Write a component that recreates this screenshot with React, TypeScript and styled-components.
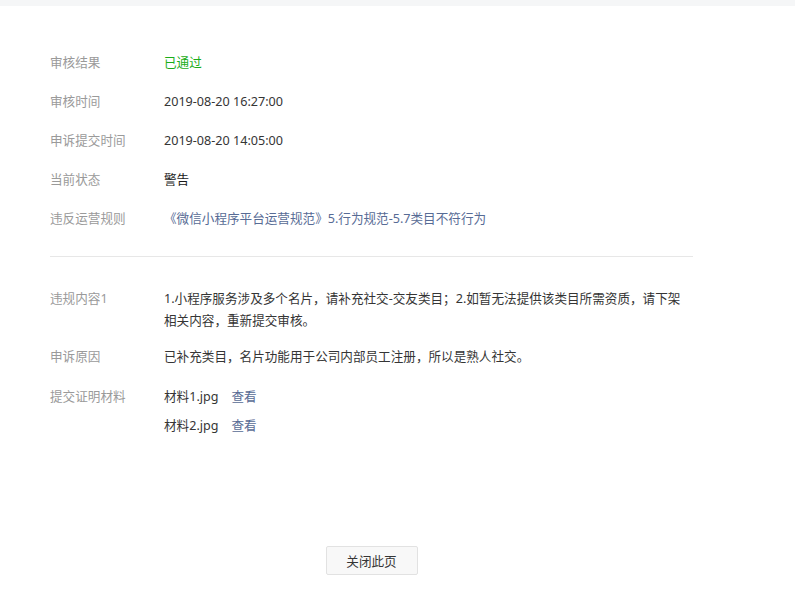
import styled, { createGlobalStyle } from "styled-components";

const GlobalStyle = createGlobalStyle`
	html, body {
		margin: 0;
		padding: 0;
		background: #ffffff;
		font-family: "Noto Sans", "Noto Sans CJK SC", sans-serif;
		font-size: 12.6px;
		color: #353535;
	}
`;

type InfoRow = { label: string; value: string; tone?: "green" | "link" | "dark" };

const summary: InfoRow[] = [
	{ label: "审核结果", value: "已通过", tone: "green" },
	{ label: "审核时间", value: "2019-08-20 16:27:00" },
	{ label: "申诉提交时间", value: "2019-08-20 14:05:00" },
	{ label: "当前状态", value: "警告", tone: "dark" },
	{ label: "违反运营规则", value: "《微信小程序平台运营规范》5.行为规范-5.7类目不符行为", tone: "link" },
];

const files = ["材料1.jpg", "材料2.jpg"];

function App() {
	return (
		<>
			<GlobalStyle />
			<TopBar />
			<Page>
				<Section>
					{summary.map((row) => (
						<Row key={row.label} $space={17}>
							<Label>{row.label}</Label>
							<Value $tone={row.tone}>{row.value}</Value>
						</Row>
					))}
				</Section>
				<Divider />
				<Section>
					<Row $space={14}>
						<Label>违规内容1</Label>
						<Value>
							1.小程序服务涉及多个名片，请补充社交-交友类目；2.如暂无法提供该类目所需资质，请下架相关内容，重新提交审核。
						</Value>
					</Row>
					<Row $space={18}>
						<Label>申诉原因</Label>
						<Value>已补充类目，名片功能用于公司内部员工注册，所以是熟人社交。</Value>
					</Row>
					<Row $space={0}>
						<Label>提交证明材料</Label>
						<FileList>
							{files.map((f) => (
								<FileItem key={f}>
									{f}
									<ViewLink href="#">查看</ViewLink>
								</FileItem>
							))}
						</FileList>
					</Row>
				</Section>
				<Footer>
					<CloseButton type="button">关闭此页</CloseButton>
				</Footer>
			</Page>
		</>
	);
}

export default App;

const TopBar = styled.div`
	height: 6px;
	background-color: #f5f6f7;
`;

const Page = styled.div`
	width: 643px;
	padding: 46px 0 0 50px;
`;

const Section = styled.div`
	display: flex;
	flex-direction: column;
`;

const Row = styled.div<{ $space: number }>`
	display: flex;
	line-height: 22px;
	margin-bottom: ${(p) => p.$space}px;
`;

const Label = styled.div`
	width: 114px;
	flex-shrink: 0;
	color: #9a9a9a;
`;

const Value = styled.div<{ $tone?: "green" | "link" | "dark" }>`
	flex: 1;
	max-width: 520px;
	color: ${(p) =>
		p.$tone === "green" ? "#1aad19" : p.$tone === "link" ? "#576b95" : p.$tone === "dark" ? "#191919" : "#353535"};
`;

const Divider = styled.div`
	height: 1px;
	background-color: #e7e7e7;
	margin: 9px 0 31px;
`;

const FileList = styled.ul`
	list-style: none;
	margin: 0;
	padding: 0;
	display: flex;
	flex-direction: column;
	gap: 7px;
`;

const FileItem = styled.li`
	color: #353535;
`;

const ViewLink = styled.a`
	color: #576b95;
	text-decoration: none;
	margin-left: 13px;
`;

const Footer = styled.div`
	display: flex;
	justify-content: center;
	padding-top: 109px;
`;

const CloseButton = styled.button`
	width: 92px;
	height: 29px;
	background-color: #f8f8f8;
	border: 1px solid #e2e2e2;
	border-radius: 2px;
	color: #353535;
	font-family: inherit;
	font-size: 12.6px;
	padding: 0;
`;
